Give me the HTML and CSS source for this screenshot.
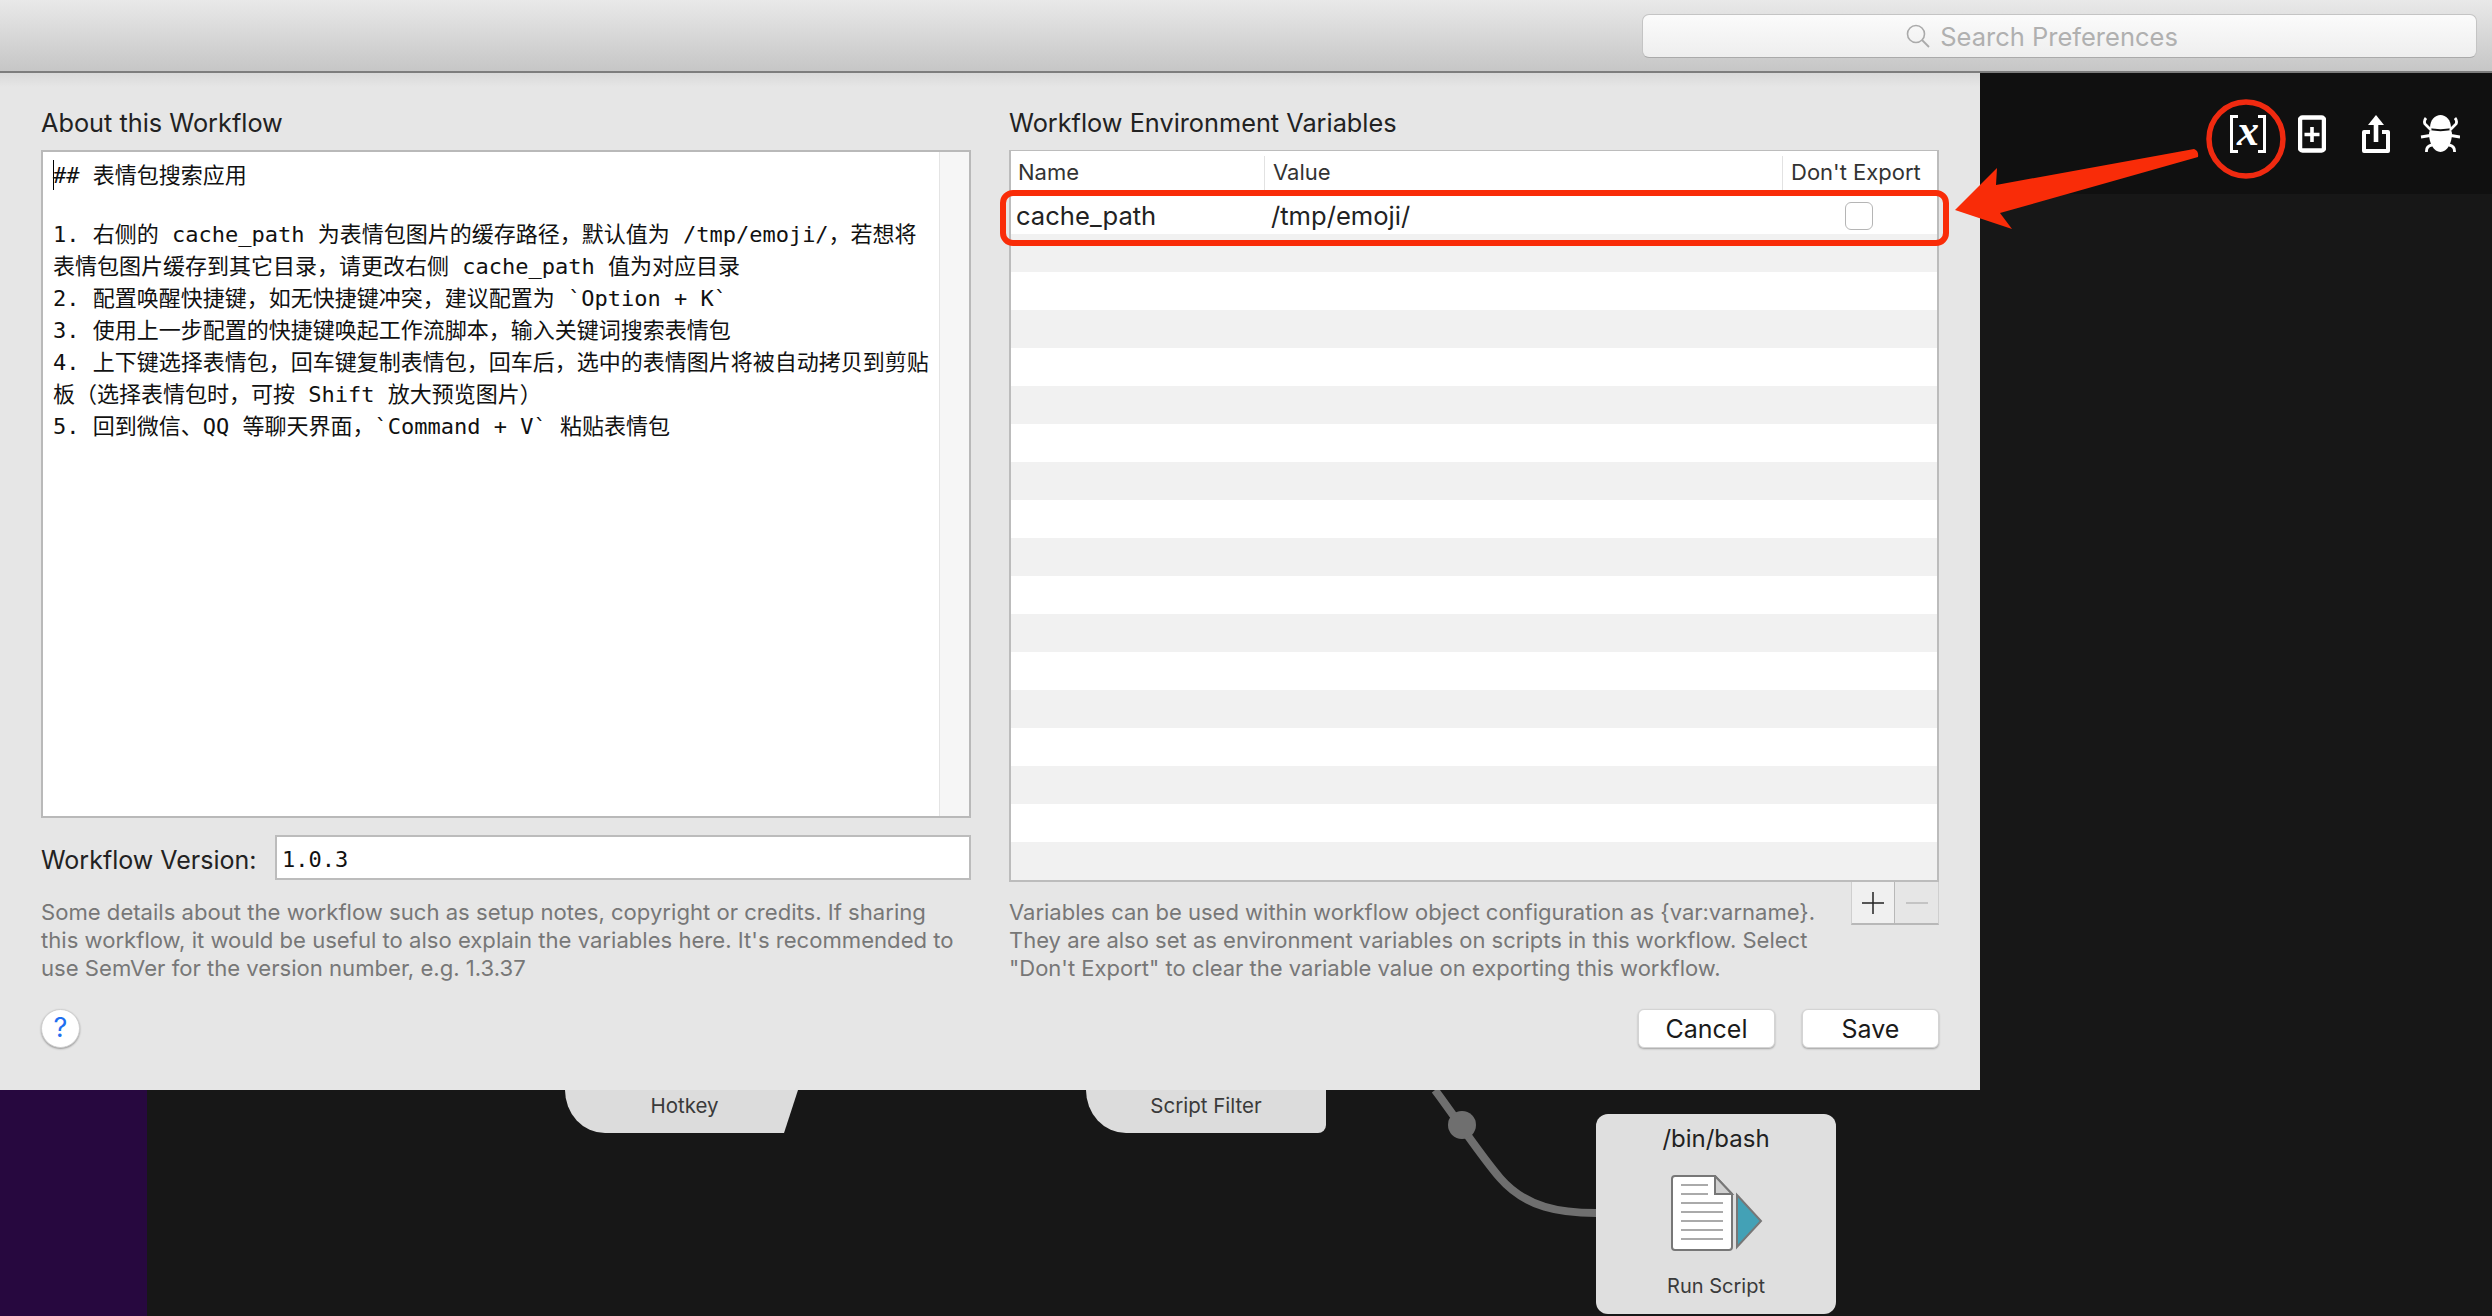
FILE: index.html
```html
<!DOCTYPE html>
<html lang="en">
<head>
    <meta charset="UTF-8">
    <meta name="viewport" content="width=device-width, initial-scale=1.0">
    <title>Workflow Configuration</title>
    <link rel="stylesheet" href="styles.css">
</head>
<body>
    <header class="toolbar">
        <div class="search">
            <svg class="search-icon" viewBox="0 0 26 26" width="26" height="26">
                <circle cx="11" cy="11" r="8.5" fill="none" stroke="#aaa" stroke-width="1.6"/>
                <path d="M17 17l7 7" stroke="#aaa" stroke-width="1.8" fill="none"/>
            </svg>
            <span>Search Preferences</span>
        </div>
    </header>

    <main class="workspace">
        <!-- canvas behind the dialog -->
        <div class="canvas">
            <div class="sidebar"></div>
            <div class="canvas-top">
                <div class="tool-vars"><span>x</span></div>
                <svg class="tool tool-add" viewBox="0 0 28 38" width="28" height="38">
                    <rect x="2" y="2.500" width="24" height="33" rx="2.500" fill="none" stroke="#fff" stroke-width="4.500"/>
                    <path d="M14 12v15M6.500 19.500h15" stroke="#fff" stroke-width="3.600" fill="none"/>
                </svg>
                <svg class="tool tool-share" viewBox="0 0 28 38" width="28" height="38">
                    <path d="M8 17H2v19h24V17h-6" fill="none" stroke="#fff" stroke-width="4" stroke-linejoin="round"/>
                    <path d="M14 27V8" stroke="#fff" stroke-width="4.600"/>
                    <path d="M14 0l8 10H6z" fill="#fff"/>
                </svg>
                <svg class="tool" viewBox="0 0 40 38" width="40" height="38">
                    <path d="M10 13C10 5 15 0 20.500 0S31 5 31 13c-6 1.500-15 1.500-21 0z" fill="#fff"/>
                    <path d="M9 19c0-2 .5-3 1.500-4 6 1.500 14 1.500 20 0 1 1 1.500 2 1.500 4 0 9-5 18-11.500 18S9 28 9 19z" fill="#fff"/>
                    <path d="M11 15L5 9Q3.500 6 6 3M30 15l6-6q1.500-3-1-6M10 20.500L1 22M31 20.500l9 1.500M12 30Q6 31 6.500 37M29 30q6 1 5.500 7" fill="none" stroke="#fff" stroke-width="2.800"/>
                </svg>
            </div>

            <div class="node node-hotkey">Hotkey</div>
            <div class="node node-filter">Script Filter</div>
            <svg class="wire" viewBox="0 0 200 140" width="200" height="140">
                <path d="M39 0C60 28 82 62 104 88C130 118 165 123 200 123" fill="none" stroke="#6f6f6f" stroke-width="8"/>
                <circle cx="66" cy="35" r="14" fill="#6f6f6f"/>
            </svg>
            <div class="node-card">
                <div class="card-title">/bin/bash</div>
                <svg class="card-icon" viewBox="0 0 94 76" width="94" height="76">
                    <path d="M5 1h40l17 18v53a3 3 0 0 1-3 3H5a3 3 0 0 1-3-3V4a3 3 0 0 1 3-3z" fill="#fff" stroke="#777" stroke-width="2"/>
                    <path d="M45 1v18h17z" fill="#d0d0d0" stroke="#777" stroke-width="2"/>
                    <path d="M11 10h27M11 19h27M11 28h42M11 37h42M11 46h42M11 55h42M11 64h42" stroke="#aaa" stroke-width="2"/>
                    <path d="M67 20l24 26-24 26z" fill="#43a1b6" stroke="#777" stroke-width="2"/>
                </svg>
                <div class="card-label">Run Script</div>
            </div>
        </div>

        <section class="dialog">
            <div class="columns">
                <div class="col">
                    <h2>About this Workflow</h2>
                    <div class="notes">
                        <div class="notes-text">
                            <p><span class="caret"></span>## 表情包搜索应用</p>
                            <p class="blank">&nbsp;</p>
                            <p>1. 右侧的 cache_path 为表情包图片的缓存路径，默认值为 /tmp/emoji/，若想将</p>
                            <p>表情包图片缓存到其它目录，请更改右侧 cache_path 值为对应目录</p>
                            <p>2. 配置唤醒快捷键，如无快捷键冲突，建议配置为 `Option + K`</p>
                            <p>3. 使用上一步配置的快捷键唤起工作流脚本，输入关键词搜索表情包</p>
                            <p>4. 上下键选择表情包，回车键复制表情包，回车后，选中的表情图片将被自动拷贝到剪贴</p>
                            <p>板（选择表情包时，可按 Shift 放大预览图片）</p>
                            <p>5. 回到微信、QQ 等聊天界面，`Command + V` 粘贴表情包</p>
                        </div>
                        <div class="scroll-track"></div>
                    </div>
                    <div class="version-row">
                        <label>Workflow Version:</label>
                        <div class="version-input">1.0.3</div>
                    </div>
                    <p class="hint">Some details about the workflow such as setup notes, copyright or credits. If sharing<br>this workflow, it would be useful to also explain the variables here. It's recommended to<br>use SemVer for the version number, e.g. 1.3.37</p>
                </div>

                <div class="col">
                    <h2>Workflow Environment Variables</h2>
                    <div class="vars">
                        <div class="vars-head">
                            <div class="c-name">Name</div>
                            <div class="c-value">Value</div>
                            <div class="c-export">Don't Export</div>
                        </div>
                        <div class="vars-row">
                            <div class="c-name">cache_path</div>
                            <div class="c-value">/tmp/emoji/</div>
                            <div class="c-export"><span class="checkbox"></span></div>
                        </div>
                        <div class="vars-row"></div><div class="vars-row"></div><div class="vars-row"></div>
                        <div class="vars-row"></div><div class="vars-row"></div><div class="vars-row"></div>
                        <div class="vars-row"></div><div class="vars-row"></div><div class="vars-row"></div>
                        <div class="vars-row"></div><div class="vars-row"></div><div class="vars-row"></div>
                        <div class="vars-row"></div><div class="vars-row"></div><div class="vars-row"></div>
                        <div class="vars-row"></div><div class="vars-row"></div>
                    </div>
                    <div class="vars-foot">
                        <p class="hint">Variables can be used within workflow object configuration as {var:varname}.<br>They are also set as environment variables on scripts in this workflow. Select<br>"Don't Export" to clear the variable value on exporting this workflow.</p>
                        <div class="plus-minus">
                            <div class="pm-btn">
                                <svg viewBox="0 0 24 24" width="24" height="24"><path d="M12 1v22M1 12h22" stroke="#222" stroke-width="1.500"/></svg>
                            </div>
                            <div class="pm-btn">
                                <svg viewBox="0 0 24 24" width="24" height="24"><path d="M1 12h22" stroke="#c4c4c4" stroke-width="2"/></svg>
                            </div>
                        </div>
                    </div>
                </div>
            </div>

            <div class="dialog-foot">
                <div class="help">?</div>
                <div class="actions">
                    <button class="btn">Cancel</button>
                    <button class="btn">Save</button>
                </div>
            </div>
        </section>

        <!-- red annotation on top of the screenshot -->
        <svg class="annotation" viewBox="0 0 2492 1243" width="2492" height="1243">
            <rect x="1003" y="120" width="943" height="50" rx="10" fill="none" stroke="#f92c08" stroke-width="6"/>
            <ellipse cx="2246" cy="66" rx="37" ry="37" fill="none" stroke="#f02a10" stroke-width="5.500"/>
            <path d="M1955 137L1997 95L1996 112L2194 76Q2199 78 2198 84L2000 140L2012 156Z" fill="#f92c08"/>
        </svg>
    </main>
</body>
</html>
```

FILE: styles.css
```css
* {
    margin: 0;
    padding: 0;
    box-sizing: border-box;
}

body {
    width: 2492px;
    height: 1316px;
    overflow: hidden;
    background: #171717;
    font-family: Inter, "Liberation Sans", sans-serif;
}

.toolbar {
    height: 73px;
    padding: 14px 15px 0 0;
    display: flex;
    justify-content: flex-end;
    background: linear-gradient(#e9e9e9, #c6c6c6);
    border-bottom: 2px solid #7d7d7d;
}

.search {
    width: 835px;
    height: 44px;
    display: flex;
    align-items: center;
    justify-content: center;
    gap: 9px;
    padding-right: 36px;
    background: linear-gradient(#fbfbfb, #eeeeee);
    border: 1px solid #c4c4c4;
    border-bottom-color: #aaa;
    border-radius: 7px;
    color: #b0b0b0;
    font-size: 25.5px;
}

.workspace {
    position: relative;
    height: 1243px;
}

.canvas {
    position: absolute;
    inset: 0;
}

.sidebar {
    position: absolute;
    left: 0;
    top: 900px;
    width: 147px;
    height: 343px;
    background: #27083f;
}

.canvas-top {
    position: absolute;
    left: 1980px;
    right: 0;
    top: 0;
    height: 121px;
    background: #101010;
    display: flex;
    align-items: flex-start;
    justify-content: flex-end;
    padding: 42px 32px 0 0;
}

.tool {
    display: block;
}

.tool-vars {
    width: 36px;
    height: 38px;
    margin-right: 32px;
    display: flex;
    justify-content: center;
    border: solid #fff;
    border-width: 3.5px 3.5px;
    color: #fff;
    font-family: "Liberation Serif", serif;
    font-style: italic;
    font-weight: bold;
    font-size: 44px;
    position: relative;
}

.tool-vars span {
    display: block;
    height: 26px;
    line-height: 26px;
    position: relative;
    z-index: 1;
}

/* black notch turns the box into a pair of brackets */
.tool-vars::before {
    content: "";
    position: absolute;
    left: 5px;
    right: 5px;
    top: -4px;
    bottom: -4px;
    background: #101010;
}

.tool-add {
    margin-right: 36px;
}

.tool-share {
    margin-right: 30px;
}

.node {
    position: absolute;
    top: 1017px;
    height: 43px;
    padding-top: 4px;
    background: #dcdcdc;
    color: #3a3a3a;
    font-size: 20.5px;
    line-height: 24px;
    text-align: center;
}

.node-hotkey {
    left: 565px;
    width: 233px;
    padding-left: 6px;
    border-bottom-left-radius: 40px 43px;
    clip-path: polygon(0 0, 100% 0, 94% 100%, 0 100%);
}

.node-filter {
    left: 1086px;
    width: 240px;
    border-bottom-left-radius: 40px 43px;
    border-bottom-right-radius: 8px;
}

.wire {
    position: absolute;
    left: 1396px;
    top: 1017px;
}

.node-card {
    position: absolute;
    left: 1596px;
    top: 1041px;
    width: 240px;
    height: 200px;
    border-radius: 12px;
    background: #dfdfdf;
    display: flex;
    flex-direction: column;
    align-items: center;
    padding-top: 10px;
}

.card-title {
    font-size: 24px;
    line-height: 30px;
    color: #222;
}

.card-icon {
    margin-top: 21px;
    margin-left: 2px;
}

.card-label {
    margin-top: 23px;
    font-size: 20px;
    line-height: 24px;
    color: #3a3a3a;
}

/* dialog */
.dialog {
    position: absolute;
    left: 0;
    top: 0;
    width: 1980px;
    height: 1017px;
    padding: 32px 41px 0;
    background: linear-gradient(#d9d9d9, #e6e6e6 14px);
}

.columns {
    display: grid;
    grid-template-columns: 930px 930px;
    column-gap: 38px;
}

.col h2 {
    height: 36px;
    margin-bottom: 9px;
    font-size: 25.3px;
    font-weight: 400;
    line-height: 36px;
    color: #222;
}

.notes {
    height: 668px;
    display: flex;
    background: #fff;
    border: 2px solid #b9b9b9;
}

.notes-text {
    flex: 1;
    padding: 8px 0 0 10px;
    font-family: "DejaVu Sans Mono", "Noto Sans CJK SC", monospace;
    font-size: 22px;
    line-height: 32px;
    color: #111;
    white-space: nowrap;
}

.notes-text .blank {
    line-height: 27px;
}

.caret {
    display: inline-block;
    width: 1px;
    height: 30px;
    margin-right: -1px;
    background: #000;
    vertical-align: -7px;
}

.scroll-track {
    width: 30px;
    background: #f6f6f6;
    border-left: 1px solid #e4e4e4;
}

.version-row {
    display: flex;
    align-items: center;
    gap: 16px;
    margin-top: 17px;
    height: 45px;
}

.version-row label {
    padding-top: 4px;
    font-size: 25px;
    color: #222;
    width: 218px;
    white-space: nowrap;
}

.version-input {
    flex: 1;
    height: 45px;
    padding-left: 5px;
    background: #fff;
    border: 2px solid #bcbcbc;
    font-family: "DejaVu Sans Mono", monospace;
    font-size: 22px;
    line-height: 45px;
    color: #111;
}

.hint {
    margin-top: 18px;
    font-size: 22.1px;
    line-height: 28px;
    color: #777;
    white-space: nowrap;
}

.vars {
    height: 732px;
    display: flex;
    flex-direction: column;
    background: #fff;
    border: 2px solid #bcbcbc;
    border-top-width: 1px;
}

.vars-head {
    height: 45px;
    flex: none;
    display: flex;
    font-size: 22px;
    color: #333;
    padding-top: 5px;
}

.vars-head > div {
    border-left: 1px solid #e2e2e2;
    height: 35px;
    line-height: 32px;
}

.vars-head .c-name {
    border-left: 0;
}

.c-name {
    width: 253px;
    padding-left: 7px;
}

.c-value {
    width: 518px;
    padding-left: 8px;
}

.c-export {
    flex: 1;
    padding-left: 8px;
    white-space: nowrap;
}

.vars-row {
    height: 38px;
    flex: none;
    display: flex;
    align-items: center;
    padding-top: 1px;
    font-size: 25.6px;
    color: #222;
}

.vars-row:nth-child(odd) {
    background: #f1f1f1;
}

.vars-row .c-name {
    padding-left: 5px;
}

.vars-row .c-value {
    padding-left: 7px;
}

.vars-row .c-export {
    padding-left: 63px;
    display: flex;
    align-items: center;
}

.checkbox {
    display: block;
    width: 28px;
    height: 28px;
    background: #fff;
    border: 1px solid #b5b5b5;
    border-radius: 6px;
}

.vars-foot {
    position: relative;
    height: 100px;
    padding-top: 1px;
}

.vars-foot .hint {
    margin-top: 15px;
    font-size: 22px;
}

.plus-minus {
    position: absolute;
    right: 0;
    top: 0;
    display: flex;
    height: 43px;
    border: 1px solid #cfcfcf;
    border-top: 0;
    border-bottom: 2px solid #b8b8b8;
}

.pm-btn {
    width: 43px;
    display: flex;
    align-items: center;
    justify-content: center;
}

.pm-btn:first-child {
    background: #f0f0f0;
    border-right: 1px solid #b8b8b8;
}

.dialog-foot {
    display: flex;
    align-items: center;
    justify-content: space-between;
    margin-top: 27px;
}

.help {
    width: 39px;
    height: 39px;
    border-radius: 50%;
    background: #fff;
    border: 1px solid #d0d0d0;
    box-shadow: 0 1px 2px rgba(0, 0, 0, .35);
    color: #1f6ff0;
    font-size: 27px;
    line-height: 36px;
    text-align: center;
}

.actions {
    display: flex;
    gap: 27px;
}

.btn {
    width: 137px;
    height: 39px;
    background: #fff;
    border: 1px solid #d4d4d4;
    border-radius: 6px;
    box-shadow: 0 1px 2px rgba(0, 0, 0, .3);
    font-family: Inter, "Liberation Sans", sans-serif;
    font-size: 25px;
    color: #1a1a1a;
}

.annotation {
    position: absolute;
    left: 0;
    top: 0;
    pointer-events: none;
}
```
